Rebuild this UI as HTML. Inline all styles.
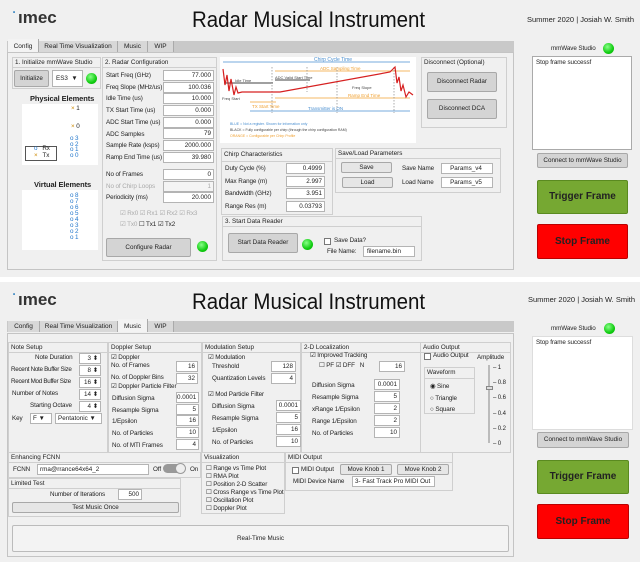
<!DOCTYPE html><html><head><meta charset="utf-8"><style>
*{box-sizing:border-box;margin:0;padding:0}
body{width:640px;height:562px;background:#fff;font-family:"Liberation Sans",sans-serif;font-size:7px;color:#222;position:relative;overflow:hidden}
div,span{position:absolute}
.bg{background:#f0f0f0}
.logo{font-size:17px;font-weight:bold;color:#333;letter-spacing:0px}
.title{font-size:22px;color:#111;white-space:nowrap;transform:scaleX(.93);transform-origin:0 0}
.sum{font-size:7.5px;white-space:nowrap}
.tabbar{background:#c9c9c9;height:11px}
.tab{height:11px;line-height:11px;font-size:6.5px;text-align:center;background:#d8d8d8;border-right:1px solid #aaa}
.tab.s{background:#f3f3f3;height:13px;margin-top:-2px;line-height:15px}
.content{background:#f0f0f0;border:1px solid #c4c4c4}
.p{border:1px solid #cfcfcf}
.h{font-size:6.3px;white-space:nowrap;line-height:9px;padding-left:2px;border-bottom:1px solid #cfcfcf;left:0;right:0;top:0;height:10px}
.l{white-space:nowrap;font-size:6.3px;line-height:9px;letter-spacing:-0.1px}
.in{background:#fff;border:1px solid #b4b4b4;text-align:right;padding-right:2px;font-size:6.3px;line-height:9px;height:11px;white-space:nowrap}
.btn{background:#d4d4d4;border:1px solid #a8a8a8;border-radius:2px;text-align:center;font-size:6.3px;white-space:nowrap}
.led{width:11px;height:11px;border-radius:50%;background:radial-gradient(circle at 40% 35%,#8f8,#1c1 60%,#0a0)}
.wb{background:#fff}
.cb{width:7px;height:7px;border:1px solid #777;background:#fff;font-size:6px;line-height:5px;text-align:center}
.gray{color:#aaa}
.trig{background:#76a832;border:1px solid #5a8a20;border-radius:2px;font-weight:bold;font-size:10px;text-align:center}
.stop{background:#f00;border:1px solid #b00;border-radius:2px;font-weight:bold;font-size:10px;text-align:center}
</style></head><body>

<!-- ===== TOP PANEL ===== -->
<div class="bg" style="left:0;top:0;width:640px;height:277px"></div>
<div class="logo" style="left:18px;top:8px"><span style="left:-5px;top:2px;font-size:6px;color:#1a75bc">•</span>ımec</div>
<div class="title" style="left:192px;top:7px">Radar Musical Instrument</div>
<div class="sum" style="left:527px;top:15px">Summer 2020 | Josiah W. Smith</div>

<div class="tabbar" style="left:7px;top:41px;width:507px"></div>
<div class="tab s" style="left:8px;top:41px;width:31px">Config</div>
<div class="tab" style="left:39px;top:41px;width:79px">Real Time Visualization</div>
<div class="tab" style="left:118px;top:41px;width:30px">Music</div>
<div class="tab" style="left:148px;top:41px;width:26px">WIP</div>
<div class="content" style="left:7px;top:52px;width:507px;height:218px"></div>

<!-- panel 1 -->
<div class="p" style="left:12px;top:57px;width:89px;height:32px"><div class="h">1. Initialize mmWave Studio</div></div>
<div class="btn" style="left:14px;top:70px;width:35px;height:17px;line-height:15px">Initialize</div>
<div class="in" style="left:52px;top:70px;width:31px;height:17px;line-height:15px;text-align:left;padding-left:3px">ES3 &nbsp;▼</div>
<div class="led" style="left:86px;top:73px"></div>
<div class="l" style="left:30px;top:94px;font-size:7.5px;font-weight:bold">Physical Elements</div>
<div class="wb" style="left:22px;top:104px;width:76px;height:61px"></div>
<div class="l" style="left:71px;top:104px;color:#c80">× <span style="position:static;color:#222">1</span></div>
<div class="l" style="left:71px;top:122px;color:#c80">× <span style="position:static;color:#222">0</span></div>
<div class="l" style="left:70px;top:136px;color:#27c;line-height:5.5px">o 3<br>o 2<br>o 1<br>o 0</div>
<div style="left:25px;top:146px;width:32px;height:15px;border:1px solid #555;background:#fff"></div>
<div class="l" style="left:34px;top:146px;line-height:6.5px"><span style="position:static;color:#27c">o</span> &nbsp;&nbsp;Rx<br><span style="position:static;color:#c80">×</span> &nbsp;&nbsp;Tx</div>
<div class="l" style="left:34px;top:180px;font-size:7.5px;font-weight:bold">Virtual Elements</div>
<div class="wb" style="left:22px;top:190px;width:76px;height:60px"></div>
<div class="l" style="left:70px;top:193px;color:#27c;line-height:6px">o 8<br>o 7<br>o 6<br>o 5<br>o 4<br>o 3<br>o 2<br>o 1</div>

<!-- panel 2 -->
<div class="p" style="left:102px;top:57px;width:115px;height:204px"><div class="h">2. Radar Configuration</div></div>
<div class="l" style="left:106px;top:70px;line-height:11.7px">Start Freq (GHz)<br>Freq Slope (MHz/us)<br>Idle Time (us)<br>TX Start Time (us)<br>ADC Start Time (us)<br>ADC Samples<br>Sample Rate (ksps)<br>Ramp End Time (us)</div>
<div class="in" style="left:163px;top:70px;width:51px">77.000</div>
<div class="in" style="left:163px;top:82px;width:51px">100.036</div>
<div class="in" style="left:163px;top:93px;width:51px">10.000</div>
<div class="in" style="left:163px;top:105px;width:51px">0.000</div>
<div class="in" style="left:163px;top:117px;width:51px">0.000</div>
<div class="in" style="left:163px;top:128px;width:51px">79</div>
<div class="in" style="left:163px;top:140px;width:51px">2000.000</div>
<div class="in" style="left:163px;top:152px;width:51px">39.980</div>
<div class="l" style="left:106px;top:170px">No of Frames</div>
<div class="l gray" style="left:106px;top:182px">No of Chirp Loops</div>
<div class="l" style="left:106px;top:193px">Periodicity (ms)</div>
<div class="in" style="left:163px;top:169px;width:51px">0</div>
<div class="in" style="left:163px;top:181px;width:51px;background:#f4f4f4;color:#aaa">1</div>
<div class="in" style="left:163px;top:192px;width:51px">20.000</div>
<div class="l gray" style="left:120px;top:209px">☑ Rx0 ☑ Rx1 ☑ Rx2 ☑ Rx3</div>
<div class="l" style="left:120px;top:220px"><span style="position:static;color:#aaa">☑ Tx0</span> ☐ Tx1 ☑ Tx2</div>
<div class="btn" style="left:106px;top:238px;width:85px;height:19px;line-height:17px">Configure Radar</div>
<div class="led" style="left:197px;top:241px"></div>

<!-- chirp diagram -->
<div class="wb" style="left:220px;top:57px;width:196px;height:86px"></div>
<svg style="position:absolute;left:220px;top:57px" width="196" height="86" viewBox="0 0 196 86">
<g stroke-width="0.7" fill="none">
<line x1="3" y1="5" x2="190" y2="5" stroke="#4a8fd0"/>
<line x1="55" y1="14" x2="190" y2="14" stroke="#f0a030"/>
<line x1="4" y1="26" x2="53" y2="26" stroke="#000"/>
<line x1="55" y1="23" x2="90" y2="23" stroke="#000"/>
<line x1="55" y1="41" x2="190" y2="41" stroke="#f0a030"/>
<line x1="30" y1="45" x2="56" y2="45" stroke="#f0a030"/>
<line x1="30" y1="54" x2="190" y2="54" stroke="#4a8fd0"/>
<line x1="52" y1="10" x2="52" y2="56" stroke="#888" stroke-dasharray="1.5 1.5"/>
<line x1="117" y1="10" x2="117" y2="56" stroke="#888" stroke-dasharray="1.5 1.5"/>
<line x1="174" y1="10" x2="174" y2="56" stroke="#888" stroke-dasharray="1.5 1.5"/>
<line x1="87" y1="10" x2="87" y2="35" stroke="#888" stroke-dasharray="1.5 1.5"/>
<polyline points="3,12 5,28 7,18 9,34 11,22 14,38 16,30 18,36 22,35 60,35 170,15 175,10 177,26 179,20 181,34 183,28 186,40 189,35 193,38" stroke="#d62020" stroke-width="1.2"/>
</g>
<g font-size="3.5" fill="#444" font-family="Liberation Sans">
<text x="94" y="4" fill="#4a8fd0" font-size="5">Chirp Cycle Time</text>
<text x="100" y="13" fill="#f0a030" font-size="4.5">ADC Sampling Time</text>
<text x="15" y="25" font-size="4">Idle Time</text>
<text x="55" y="22" font-size="4">ADC Valid Start Time</text>
<text x="128" y="40" fill="#f0a030" font-size="4.5">Ramp End Time</text>
<text x="32" y="51" fill="#f0a030" font-size="4.5">TX Start Time</text>
<text x="88" y="53" fill="#4a8fd0" font-size="4.5">Transmitter is ON</text>
<text x="2" y="43" font-size="4">Freq Start</text>
<text x="132" y="32" font-size="4">Freq Slope</text>
<text x="10" y="68" fill="#4a8fd0">BLUE = Not a register. Shown for information only</text>
<text x="10" y="74">BLACK = Fully configurable per chirp (through the chirp configuration RAM)</text>
<text x="10" y="80" fill="#f0a030">ORANGE = Configurable per Chirp Profile</text>
</g></svg>

<!-- disconnect -->
<div class="p" style="left:421px;top:57px;width:86px;height:71px"><div class="h" style="border:none">Disconnect (Optional)</div></div>
<div class="btn" style="left:427px;top:72px;width:70px;height:20px;line-height:18px">Disconnect Radar</div>
<div class="btn" style="left:427px;top:99px;width:70px;height:20px;line-height:18px">Disconnect DCA</div>

<!-- chirp characteristics -->
<div class="p" style="left:221px;top:148px;width:112px;height:67px"><div class="h" style="height:13px;line-height:12px">Chirp Characteristics</div></div>
<div class="l" style="left:225px;top:163px;line-height:12.6px">Duty Cycle (%)<br>Max Range (m)<br>Bandwidth (GHz)<br>Range Res (m)</div>
<div class="in" style="left:286px;top:163px;width:39px">0.4999</div>
<div class="in" style="left:286px;top:176px;width:39px">2.997</div>
<div class="in" style="left:286px;top:188px;width:39px">3.951</div>
<div class="in" style="left:286px;top:201px;width:39px">0.03793</div>

<!-- save/load -->
<div class="p" style="left:335px;top:148px;width:166px;height:45px"><div class="h">Save/Load Parameters</div></div>
<div class="btn" style="left:341px;top:162px;width:51px;height:11px;line-height:10px;background:#e6e6e6">Save</div>
<div class="btn" style="left:342px;top:177px;width:51px;height:11px;line-height:10px;background:#e6e6e6">Load</div>
<div class="l" style="left:402px;top:164px">Save Name</div>
<div class="l" style="left:402px;top:178px">Load Name</div>
<div class="in" style="left:441px;top:163px;width:52px;text-align:center">Params_v4</div>
<div class="in" style="left:441px;top:177px;width:52px;text-align:center">Params_v5</div>

<!-- start data reader -->
<div class="p" style="left:222px;top:216px;width:200px;height:45px"><div class="h">3. Start Data Reader</div></div>
<div class="btn" style="left:228px;top:233px;width:70px;height:20px;line-height:18px">Start Data Reader</div>
<div class="led" style="left:302px;top:239px"></div>
<div class="cb" style="left:324px;top:238px"></div>
<div class="l" style="left:334px;top:236px">Save Data?</div>
<div class="l" style="left:327px;top:247px">File Name:</div>
<div class="in" style="left:363px;top:246px;width:52px;text-align:left;padding-left:3px">filename.bin</div>

<!-- right -->
<div class="l" style="left:551px;top:44px">mmWave Studio</div>
<div class="led" style="left:603px;top:43px"></div>
<div class="wb" style="left:532px;top:56px;width:100px;height:94px;border:1px solid #aaa"><span class="l" style="left:3px;top:1px">Stop frame successf</span></div>
<div class="btn" style="left:537px;top:153px;width:91px;height:15px;line-height:13px">Connect to mmWave Studio</div>
<div class="trig" style="left:537px;top:180px;width:91px;height:34px;line-height:32px">Trigger Frame</div>
<div class="stop" style="left:537px;top:224px;width:91px;height:35px;line-height:33px">Stop Frame</div>

<!-- ===== BOTTOM PANEL ===== -->
<div class="bg" style="left:0;top:282px;width:640px;height:280px"></div>
<div class="logo" style="left:18px;top:290px"><span style="left:-5px;top:2px;font-size:6px;color:#1a75bc">•</span>ımec</div>
<div class="title" style="left:192px;top:289px">Radar Musical Instrument</div>
<div class="sum" style="left:528px;top:295px">Summer 2020 | Josiah W. Smith</div>

<div class="tabbar" style="left:7px;top:321px;width:507px"></div>
<div class="tab" style="left:8px;top:321px;width:32px">Config</div>
<div class="tab" style="left:40px;top:321px;width:78px">Real Time Visualization</div>
<div class="tab s" style="left:118px;top:321px;width:30px">Music</div>
<div class="tab" style="left:148px;top:321px;width:26px">WIP</div>
<div class="content" style="left:7px;top:333px;width:507px;height:224px"></div>

<!-- note setup -->
<div class="p" style="left:8px;top:342px;width:100px;height:111px"><div class="h">Note Setup</div></div>
<div class="l" style="left:35px;top:353px">Note Duration</div>
<div class="l" style="left:11px;top:365px;letter-spacing:-0.3px">Recent Note Buffer Size</div>
<div class="l" style="left:11px;top:377px;letter-spacing:-0.3px">Recent Mod Buffer Size</div>
<div class="l" style="left:12px;top:389px">Number of Notes</div>
<div class="l" style="left:30px;top:401px">Starting Octave</div>
<div class="l" style="left:12px;top:414px">Key</div>
<div class="in" style="left:79px;top:353px;width:22px">3 ⬍</div>
<div class="in" style="left:79px;top:365px;width:22px">8 ⬍</div>
<div class="in" style="left:79px;top:377px;width:22px">16 ⬍</div>
<div class="in" style="left:79px;top:389px;width:22px">14 ⬍</div>
<div class="in" style="left:79px;top:401px;width:22px">4 ⬍</div>
<div class="in" style="left:30px;top:413px;width:22px;text-align:left;padding-left:2px">F ▼</div>
<div class="in" style="left:55px;top:413px;width:47px;text-align:left;padding-left:2px">Pentatonic ▼</div>

<!-- doppler -->
<div class="p" style="left:108px;top:342px;width:94px;height:111px"><div class="h">Doppler Setup</div></div>
<div class="l" style="left:111px;top:353px">☑ Doppler</div>
<div class="l" style="left:111px;top:361px">No. of Frames</div>
<div class="l" style="left:111px;top:373px">No. of Doppler Bins</div>
<div class="l" style="left:111px;top:382px">☑ Doppler Particle Filter</div>
<div class="l" style="left:112px;top:393px;line-height:11.7px">Diffusion Sigma<br>Resample Sigma<br>1/Epsilon<br>No. of Particles<br>No. of MTI Frames</div>
<div class="in" style="left:176px;top:361px;width:22px">16</div>
<div class="in" style="left:176px;top:373px;width:22px">32</div>
<div class="in" style="left:176px;top:392px;width:23px">0.0001</div>
<div class="in" style="left:176px;top:404px;width:23px">5</div>
<div class="in" style="left:176px;top:415px;width:23px">16</div>
<div class="in" style="left:176px;top:427px;width:23px">10</div>
<div class="in" style="left:176px;top:439px;width:23px">4</div>

<!-- modulation -->
<div class="p" style="left:202px;top:342px;width:99px;height:111px"><div class="h">Modulation Setup</div></div>
<div class="l" style="left:208px;top:353px">☑ Modulation</div>
<div class="l" style="left:212px;top:362px">Threshold</div>
<div class="l" style="left:212px;top:374px">Quantization Levels</div>
<div class="in" style="left:271px;top:361px;width:25px">128</div>
<div class="in" style="left:271px;top:373px;width:25px">4</div>
<div class="l" style="left:208px;top:390px">☑ Mod Particle Filter</div>
<div class="l" style="left:212px;top:401px;line-height:12px">Diffusion Sigma<br>Resample Sigma<br>1/Epsilon<br>No. of Particles</div>
<div class="in" style="left:276px;top:400px;width:25px">0.0001</div>
<div class="in" style="left:276px;top:412px;width:25px">5</div>
<div class="in" style="left:276px;top:424px;width:25px">16</div>
<div class="in" style="left:276px;top:436px;width:25px">10</div>

<!-- 2-D localization -->
<div class="p" style="left:301px;top:342px;width:120px;height:111px"><div class="h">2-D Localization</div></div>
<div class="l" style="left:310px;top:351px">☑ Improved Tracking</div>
<div class="l" style="left:319px;top:361px">☐ PF ☑ DFF &nbsp;&nbsp;N</div>
<div class="in" style="left:379px;top:361px;width:26px">16</div>
<div class="l" style="left:312px;top:380px;line-height:12px">Diffusion Sigma<br>Resample Sigma<br>xRange 1/Epsilon<br>Range 1/Epsilon<br>No. of Particles</div>
<div class="in" style="left:374px;top:379px;width:26px">0.0001</div>
<div class="in" style="left:374px;top:391px;width:26px">5</div>
<div class="in" style="left:374px;top:403px;width:26px">2</div>
<div class="in" style="left:374px;top:415px;width:26px">2</div>
<div class="in" style="left:374px;top:427px;width:26px">10</div>

<!-- audio output -->
<div class="p" style="left:420px;top:342px;width:91px;height:111px"><div class="h">Audio Output</div></div>
<div class="cb" style="left:424px;top:353px"></div>
<div class="l" style="left:433px;top:351px">Audio Output</div>
<div class="l" style="left:477px;top:353px">Amplitude</div>
<div class="p" style="left:424px;top:367px;width:51px;height:47px"><div class="h" style="height:11px">Waveform</div></div>
<div class="l" style="left:430px;top:381px;line-height:11.5px">◉ Sine<br>○ Triangle<br>○ Square</div>
<div style="left:488px;top:365px;width:2px;height:78px;background:#bbb"></div>
<div style="left:486px;top:386px;width:7px;height:4px;background:#ddd;border:1px solid #888"></div>
<div class="l" style="left:493px;top:361px;line-height:15.2px;font-size:6px">– 1<br>– 0.8<br>– 0.6<br>– 0.4<br>– 0.2<br>– 0</div>

<!-- FCNN -->
<div class="p" style="left:8px;top:452px;width:193px;height:26px"><div class="h">Enhancing FCNN</div></div>
<div class="l" style="left:13px;top:465px">FCNN</div>
<div class="in" style="left:37px;top:464px;width:112px;text-align:left;padding-left:2px">rma@rrance64x64_2</div>
<div class="l" style="left:153px;top:465px">Off</div>
<div style="left:163px;top:464px;width:22px;height:9px;border-radius:5px;background:#999"></div>
<div style="left:175px;top:463px;width:11px;height:11px;border-radius:50%;background:#eee;border:1px solid #999"></div>
<div class="l" style="left:190px;top:465px">On</div>

<!-- limited test -->
<div class="p" style="left:8px;top:478px;width:173px;height:39px"><div class="h">Limited Test</div></div>
<div class="l" style="left:50px;top:490px">Number of Iterations</div>
<div class="in" style="left:118px;top:489px;width:24px">500</div>
<div class="btn" style="left:12px;top:502px;width:167px;height:11px;line-height:10px;background:#e6e6e6">Test Music Once</div>

<!-- visualization -->
<div class="p" style="left:201px;top:452px;width:84px;height:62px"><div class="h">Visualization</div></div>
<div class="l" style="left:206px;top:465px;line-height:8px"><span style="position:static">☐ Range vs Time Plot</span><br>☐ RMA Plot<br>☐ Position 2-D Scatter<br>☐ Cross Range vs Time Plot<br>☐ Oscillation Plot<br>☐ Doppler Plot</div>

<!-- MIDI -->
<div class="p" style="left:285px;top:452px;width:168px;height:39px"><div class="h">MIDI Output</div></div>
<div class="cb" style="left:292px;top:467px"></div>
<div class="l" style="left:301px;top:465px">MIDI Output</div>
<div class="btn" style="left:340px;top:464px;width:52px;height:11px;line-height:10px;background:#e6e6e6">Move Knob 1</div>
<div class="btn" style="left:397px;top:464px;width:52px;height:11px;line-height:10px;background:#e6e6e6">Move Knob 2</div>
<div class="l" style="left:293px;top:477px">MIDI Device Name</div>
<div class="in" style="left:352px;top:476px;width:83px;text-align:left;padding-left:2px">3- Fast Track Pro MIDI Out</div>

<div class="btn" style="left:12px;top:525px;width:497px;height:27px;line-height:25px;background:#f3f3f3;border-color:#bbb">Real-Time Music</div>

<!-- right bottom -->
<div class="l" style="left:551px;top:324px">mmWave Studio</div>
<div class="led" style="left:604px;top:323px"></div>
<div class="wb" style="left:532px;top:336px;width:101px;height:94px;border:1px solid #ddd"><span class="l" style="left:3px;top:1px">Stop frame successf</span></div>
<div class="btn" style="left:537px;top:432px;width:92px;height:16px;line-height:14px">Connect to mmWave Studio</div>
<div class="trig" style="left:537px;top:460px;width:92px;height:34px;line-height:32px">Trigger Frame</div>
<div class="stop" style="left:537px;top:504px;width:92px;height:35px;line-height:33px">Stop Frame</div>
</body></html>
